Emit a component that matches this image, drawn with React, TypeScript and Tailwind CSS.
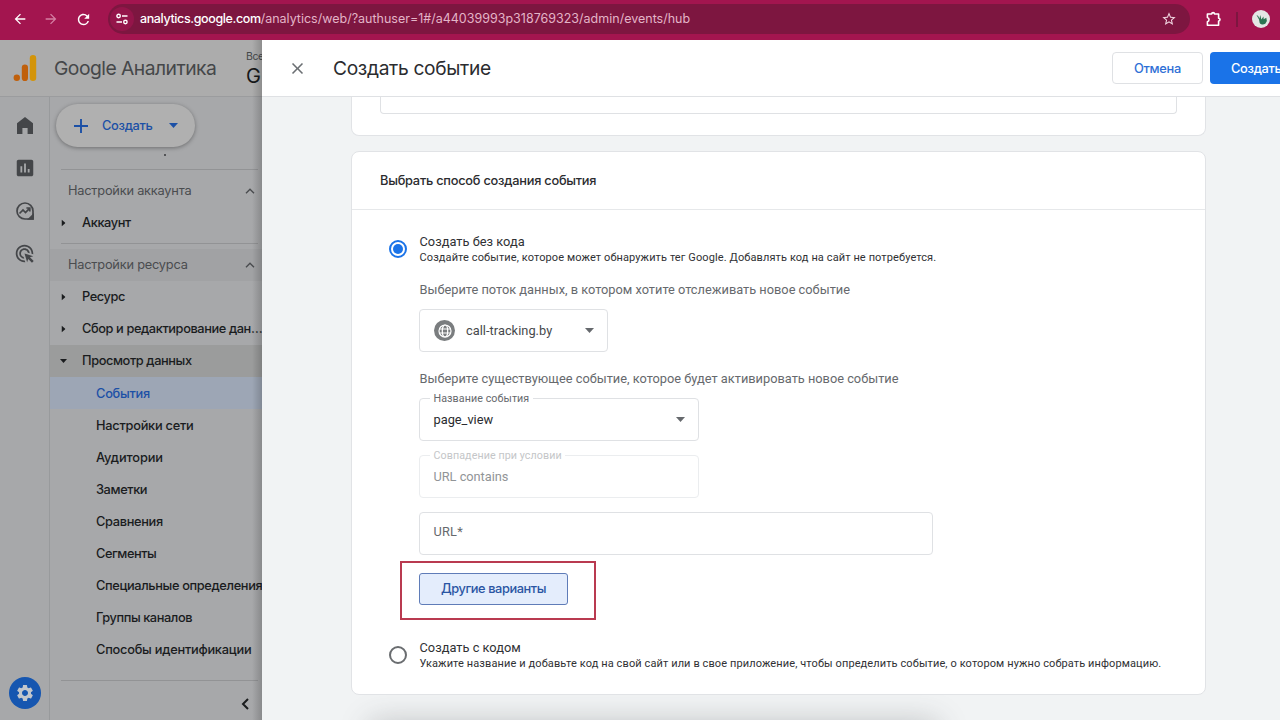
import React, { useState } from 'react';
import {
  MdArrowBack,
  MdArrowForward,
  MdRefresh,
  MdStarBorder,
  MdClose,
  MdSettings,
  MdInsertChart,
  MdAdsClick,
} from 'react-icons/md';

const subItems = [
  { label: 'События', tracking: 'tracking-[-0.25px]' },
  { label: 'Настройки сети', tracking: 'tracking-[-0.25px]' },
  { label: 'Аудитории', tracking: 'tracking-[-0.1px]' },
  { label: 'Заметки', tracking: 'tracking-[-0.4px]' },
  { label: 'Сравнения', tracking: 'tracking-[-0.33px]' },
  { label: 'Сегменты', tracking: 'tracking-[-0.45px]' },
  { label: 'Специальные определения', tracking: 'tracking-[-0.36px]' },
  { label: 'Группы каналов', tracking: 'tracking-[-0.42px]' },
  { label: 'Способы идентификации', tracking: 'tracking-[-0.24px]' },
];

// --- MAIN APP ---
export default function App() {
  return (
    <div className="w-[1280px] h-[720px] overflow-hidden flex flex-col bg-[#f1f3f4] font-['Roboto','Liberation_Sans',sans-serif]">
      <BrowserBar />
      <div className="flex flex-1 min-h-0">
        <DimmedPage />
        <Drawer />
      </div>
    </div>
  );
}

// --- BROWSER BAR ---
function BrowserBar() {
  return (
    <div className="h-10 shrink-0 bg-[#a3154f] flex items-start pt-[4px] text-white">
      <div className="flex items-center h-[30px] w-[108px] shrink-0">
        <MdArrowBack className="ml-[12px] size-[16px]" />
        <MdArrowForward className="ml-[15px] size-[16px] text-[#d57fa3]" />
        <MdRefresh className="ml-[16px] size-[17px]" />
      </div>
      <div className="flex items-center h-[30px] w-[1082px] shrink-0 rounded-full bg-[#7d1640]">
        <span className="ml-[2px] size-6 rounded-full bg-[#94154a] flex items-center justify-center">
          <svg viewBox="0 0 12 12" className="size-3" fill="none" stroke="#fff" strokeWidth="1.4">
            <circle cx="2.6" cy="3" r="1.7" />
            <path d="M6 3h5.5M0.5 9H6" />
            <circle cx="9.4" cy="9" r="1.7" />
          </svg>
        </span>
        <span className="ml-[6px] text-[12.5px] font-['Inter',sans-serif] text-[#e3b4c7] whitespace-nowrap">
          <span className="text-white font-medium tracking-[-0.38px]">analytics.google.com</span>/analytics/web/?authuser=1#/a44039993p318769323/admin/events/hub
        </span>
        <MdStarBorder className="ml-auto mr-[13px] size-4 text-[#f0d5e0]" />
      </div>
      <div className="flex items-center h-[30px]">
        <svg viewBox="0 0 16 16" className="ml-[16px] size-4" fill="none" stroke="currentColor" strokeWidth="1.6" strokeLinejoin="round">
          <path d="M1.4 3h4.3a1.4 1.4 0 0 1 2.8 0H12.6v4.2a1.4 1.4 0 0 1 0 2.8v4.2H1.4v-3.4a2.3 2.3 0 0 0 0-4.4z" />
        </svg>
        <span className="ml-[14px] w-[2px] h-[15px] bg-[#7d1640]" />
        <svg viewBox="0 0 18 18" className="ml-[14px] size-[18px]">
          <circle cx="9" cy="9" r="9" fill="#e4e6e5" />
          <path d="M4.5 5l1.7 1 1.2 2.4L8.3 5l1 4.6 2.2-3.2.2 2.8 2.6-1.4.6 3.2-1.6 2.8c-2 1.1-4.6.9-5.6-.8L7 9.4z" fill="#2b7452" />
        </svg>
      </div>
    </div>
  );
}

// --- PAGE BEHIND THE DRAWER ---
function DimmedPage() {
  return (
    <div className="relative w-[262px] shrink-0 overflow-hidden flex flex-col bg-[#a7a8aa] font-['Inter','Liberation_Sans',sans-serif]">
      <div className="h-[57px] shrink-0 border-b border-[#9b9c9e] bg-[#acacac] flex items-center">
        <svg viewBox="0 0 24 28" className="ml-[13px] w-6 h-7 shrink-0">
          <rect x="16.8" y="1" width="6.4" height="26" rx="3.2" fill="#d39409" />
          <rect x="8.8" y="10.5" width="6.2" height="16.5" rx="3.1" fill="#c0600c" />
          <circle cx="3.8" cy="23.8" r="3.2" fill="#c0600c" />
        </svg>
        <span className="ml-[17px] w-[163px] shrink-0 text-[19.3px] tracking-[-0.52px] text-[#454749] whitespace-nowrap">Google Аналитика</span>
        <span className="ml-[14px] w-px h-[29px] bg-[#969799]" />
        <div className="ml-[15px] w-[16px] pt-px flex flex-col whitespace-nowrap">
          <span className="text-[10.5px] leading-[14px] tracking-[-0.4px] text-[#454749]">Все</span>
          <span className="text-[20px] leading-[24px] text-[#17181a]">G</span>
        </div>
      </div>
      <div className="flex flex-1 min-h-0">
        <Rail />
        <Sidebar />
      </div>
      {/* shadow cast by the drawer */}
      <div className="absolute inset-y-0 right-0 w-[10px] bg-linear-to-r from-black/0 to-black/18" />
    </div>
  );
}

function Rail() {
  return (
    <div className="w-[50px] shrink-0 border-r border-[#989a9c] flex flex-col items-center text-[#444649]">
      <svg viewBox="0 0 16 17" className="mt-[20px] w-4 h-[17px]" fill="currentColor">
        <path d="M0 6.2 8 0l8 6.2V17h-5.4v-6H5.4v6H0z" />
      </svg>
      <MdInsertChart className="mt-[23px] size-[22px]" />
      <svg viewBox="0 0 18 18" className="mt-[23px] size-[18px]" fill="none" stroke="currentColor" strokeWidth="1.7">
        <path d="M17 9a8 8 0 1 0-8 8h8z" />
        <path d="M3.5 11.5 7 8l2.5 2.6 4-4.3M10.4 6h3.4v3.4" />
        <path d="M13 17h4v-4z" fill="currentColor" />
      </svg>
      <MdAdsClick className="mt-[23px] size-[21px]" />
      <button className="mt-auto mb-[11px] size-8 rounded-full bg-[#1656b0] flex items-center justify-center text-[#c2c6cc]">
        <MdSettings className="size-5" />
      </button>
    </div>
  );
}

function Sidebar() {
  const [active, setActive] = useState('События');

  return (
    <div className="w-[212px] shrink-0 text-[12.8px] text-[#1a1c1e] whitespace-nowrap">
      <button className="mt-[7px] ml-[6px] w-[139px] h-[43px] rounded-full bg-[#b0b0b0] shadow-[0_1px_4px_rgba(0,0,0,0.35)] flex items-center text-[#1c50a6] font-medium tracking-[-0.3px]">
        <svg viewBox="0 0 14 14" className="ml-[18px] size-[14px]" stroke="currentColor" strokeWidth="1.9">
          <path d="M7 0v14M0 7h14" />
        </svg>
        <span className="ml-[14px] w-[51px] text-left">Создать</span>
        <Triangle className="ml-[16px] w-[9px] h-[5px]" />
      </button>
      <div className="h-[22px] pt-[7px] pl-[114px]">
        <span className="block size-[2px] rounded-full bg-[#37393b]" />
      </div>

      <Divider />
      <GroupHeading label="Настройки аккаунта" className="mt-[5px]" />
      <TreeRow label="Аккаунт" />
      <Divider className="mt-[4px]" />
      <GroupHeading label="Настройки ресурса" className="mt-[5px] bg-[#a1a2a4]" />
      <TreeRow label="Ресурс" />
      <TreeRow label="Сбор и редактирование дан…" />
      <TreeRow label="Просмотр данных" open />

      {subItems.map((item) => (
        <div
          key={item.label}
          onClick={() => setActive(item.label)}
          className={`h-8 pt-px pl-[46px] flex items-center font-medium cursor-pointer ${item.tracking} ${active === item.label ? 'bg-[#9da6b5] text-[#1c50a6]' : ''}`}
        >
          {item.label}
        </div>
      ))}

      <Divider className="mt-[15px]" />
      <svg viewBox="0 0 8 12" className="mt-[17px] ml-[191px] w-2 h-3" fill="none" stroke="currentColor" strokeWidth="2">
        <path d="M7 1 2 6l5 5" />
      </svg>
    </div>
  );
}

function Divider({ className = '' }: { className?: string }) {
  return <div className={`h-px ml-[11px] mr-[4px] bg-[#929395] ${className}`} />;
}

function GroupHeading({ label, className = '' }: { label: string; className?: string }) {
  return (
    <div className={`h-8 pl-[18px] pr-[7px] flex items-center justify-between tracking-[-0.22px] text-[#4a4c4f] ${className}`}>
      {label}
      <svg viewBox="0 0 10 6" className="w-[10px] h-[6px]" fill="none" stroke="currentColor" strokeWidth="1.4">
        <path d="M1 5.2 5 1.2l4 4" />
      </svg>
    </div>
  );
}

function TreeRow({ label, open = false }: { label: string; open?: boolean }) {
  return (
    <div className={`h-8 flex items-center font-medium tracking-[-0.4px] ${open ? 'bg-[#9b9c9c]' : ''}`}>
      <span className="w-[32px] shrink-0 pl-[10px]">
        <Triangle className={open ? 'w-[7px] h-[4px]' : 'w-[7px] h-[4px] -rotate-90'} />
      </span>
      {label}
    </div>
  );
}

function Triangle({ className = '' }: { className?: string }) {
  return (
    <svg viewBox="0 0 10 5" preserveAspectRatio="none" className={className} fill="currentColor">
      <path d="M0 0h10L5 5z" />
    </svg>
  );
}

// --- DRAWER ---
function Drawer() {
  return (
    <div className="relative w-[1018px] shrink-0 overflow-hidden flex flex-col bg-[#f1f3f4]">
      <div className="h-[57px] shrink-0 border-b border-[#dfe1e4] bg-white flex items-center font-['Inter','Liberation_Sans',sans-serif]">
        <MdClose className="ml-[26px] size-[19px] text-[#6b6f73]" />
        <h1 className="ml-[26px] text-[19.2px] tracking-[-0.34px] text-[#2b2c2f]">Создать событие</h1>
        <button className="ml-auto w-[91px] h-[32px] pt-px shrink-0 rounded border border-[#dfe1e4] text-[12.8px] tracking-[-0.3px] font-medium text-[#2f70d6]">Отмена</button>
        <button className="ml-[7px] w-[70px] pl-[21px] pt-px h-[32px] shrink-0 rounded-l bg-[#1a73e8] text-[12.8px] tracking-[-0.3px] font-medium text-white text-left whitespace-nowrap">Создать</button>
      </div>

      <div className="flex-1 min-h-0 ml-[89px] w-[855px]">
        <section className="h-[39px] px-[28px] rounded-b-lg border border-t-0 border-[#e1e3e6] bg-white">
          <div className="h-[17px] rounded-b border border-t-0 border-[#dfe1e4]" />
        </section>

        <section className="relative z-10 mt-[15px] h-[544px] rounded-lg border border-[#e1e3e6] bg-white flex flex-col">
          <h2 className="h-[58px] shrink-0 px-[28px] flex items-center border-b border-[#e6e8ea] font-['Inter','Liberation_Sans',sans-serif] text-[12.8px] tracking-[-0.24px] font-medium text-[#2b2c2f]">
            Выбрать способ создания события
          </h2>
          <EventForm />
        </section>
      </div>

      {/* glow of the bar that sits just below the fold */}
      <div className="absolute left-[108px] top-[682px] w-[568px] h-[40px] rounded shadow-[0_0_30px_0_rgba(60,64,67,0.28)]" />
    </div>
  );
}

function Radio({ checked, onClick }: { checked: boolean; onClick: () => void }) {
  return (
    <button
      onClick={onClick}
      className={`size-[18px] shrink-0 rounded-full border-2 flex items-center justify-center ${checked ? 'border-[#1a73e8]' : 'border-[#6a6d70]'}`}
    >
      {checked && <span className="size-[10px] rounded-full bg-[#1a73e8]" />}
    </button>
  );
}

function EventForm() {
  const [mode, setMode] = useState<'no-code' | 'code'>('no-code');

  return (
    <div className="pl-[37px] pt-[22px] text-[#303134] whitespace-nowrap">
      <div className="flex items-center gap-[12px] h-[34px]">
        <Radio checked={mode === 'no-code'} onClick={() => setMode('no-code')} />
        <div className="pl-[0.5px]">
          <div className="text-[12.8px] leading-[18px] tracking-[0.02px]">Создать без кода</div>
          <div className="text-[11px] leading-[14px] tracking-[0.105px]">Создайте событие, которое может обнаружить тег Google. Добавлять код на сайт не потребуется.</div>
        </div>
      </div>

      <div className="relative ml-[30px] flex flex-col items-start text-[12.8px] text-[#66696d]">
        <div className="mt-[14px] h-[20px] pl-[0.5px] leading-[20px]">Выберите поток данных, в котором хотите отслеживать новое событие</div>
        <div className="mt-[9px] w-[189px] h-[43px] rounded border border-[#dfe1e4] flex items-center">
          <span className="ml-[14px] size-[21px] rounded-full bg-[#7a7d7f] flex items-center justify-center">
            <svg viewBox="0 0 14 14" className="size-[14px]" fill="none" stroke="#fff" strokeWidth="1.2">
              <circle cx="7" cy="7" r="6" />
              <ellipse cx="7" cy="7" rx="2.7" ry="6" />
              <path d="M1.5 5h11M1.5 9h11" />
            </svg>
          </span>
          <span className="ml-[11px] tracking-[0.03px] text-[#47494c]">call-tracking.by</span>
          <Triangle className="ml-auto mr-[13px] w-[9px] h-[5px]" />
        </div>

        <div className="mt-[17px] h-[20px] pl-[0.5px] leading-[20px]">Выберите существующее событие, которое будет активировать новое событие</div>
        <div className="relative mt-[9px] w-[280px] h-[43px] rounded border border-[#dfe1e4] flex items-center pl-[13.5px]">
          <span className="absolute left-[10px] -top-[7px] px-[3.5px] bg-white text-[10.7px] leading-[14px] tracking-[0.08px]">Название события</span>
          <span className="text-[#2b2c2f]">page_view</span>
          <Triangle className="ml-auto mr-[13px] w-[9px] h-[5px]" />
        </div>
        <div className="relative mt-[14px] w-[280px] h-[43px] rounded border border-[#ebedef] flex items-center pl-[13.5px]">
          <span className="absolute left-[10px] -top-[7px] px-[3.5px] bg-white text-[10.7px] leading-[14px] tracking-[0.09px] text-[#c4c6c8]">Совпадение при условии</span>
          <span className="tracking-[-0.03px] text-[#919497]">URL contains</span>
        </div>
        <div className="mt-[14px] w-[514px] h-[43px] rounded border border-[#dfe1e4] pl-[13.5px] pt-[9px] tracking-[0.2px]">URL*</div>
        <button className="mt-[18px] w-[149px] h-[32px] rounded-[3px] border border-[#5f7cb8] bg-[#e4edfc] font-['Inter','Liberation_Sans',sans-serif] font-medium tracking-[-0.42px] text-[#2a55a3]">
          Другие варианты
        </button>
        <div className="absolute -left-[19px] top-[295px] w-[196px] h-[59px] border-2 border-[#b93a50] pointer-events-none" />
      </div>

      <div className="mt-[33px] flex items-center gap-[12px] h-[34px]">
        <Radio checked={mode === 'code'} onClick={() => setMode('code')} />
        <div className="pl-[0.5px]">
          <div className="text-[12.8px] leading-[18px] tracking-[0.02px]">Создать с кодом</div>
          <div className="text-[11px] leading-[14px] tracking-[0.105px]">Укажите название и добавьте код на свой сайт или в свое приложение, чтобы определить событие, о котором нужно собрать информацию.</div>
        </div>
      </div>
    </div>
  );
}
